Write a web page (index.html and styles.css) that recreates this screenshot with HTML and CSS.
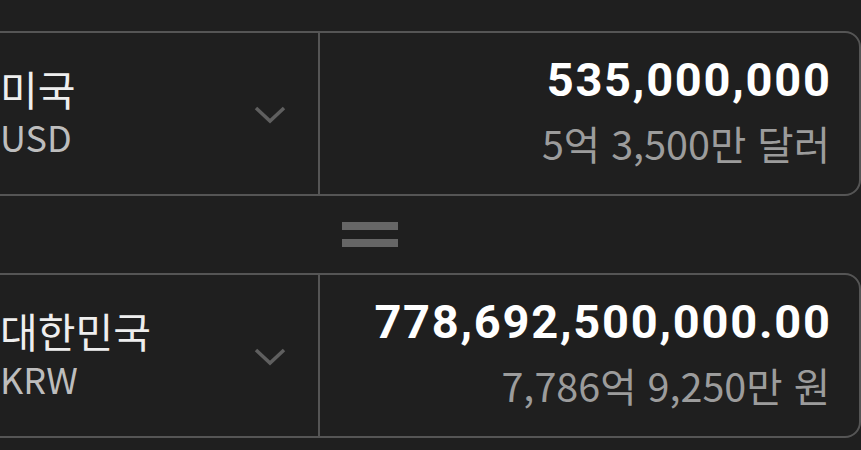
FILE: index.html
```html
<!DOCTYPE html>
<html lang="ko">
<head>
  <meta charset="utf-8">
  <title>환율 계산기</title>
  <meta name="viewport" content="width=device-width, initial-scale=1.0">
  <link rel="stylesheet" href="styles.css">
</head>
<body>
  <div class="converter">
    <div class="card">
      <div class="currency">
        <div class="names">
          <div class="country">미국</div>
          <div class="code">USD</div>
        </div>
        <svg class="chevron" width="32" height="20" viewBox="0 0 32 20">
          <path d="M2 3 L16 16 L30 3" fill="none" stroke="#5f5f5f" stroke-width="3.5"/>
        </svg>
      </div>
      <div class="amount">
        <div class="value">535,000,000</div>
        <div class="words">5억 3,500만 달러</div>
      </div>
    </div>

    <div class="equals">
      <span></span>
      <span></span>
    </div>

    <div class="card">
      <div class="currency">
        <div class="names">
          <div class="country">대한민국</div>
          <div class="code">KRW</div>
        </div>
        <svg class="chevron" width="32" height="20" viewBox="0 0 32 20">
          <path d="M2 3 L16 16 L30 3" fill="none" stroke="#5f5f5f" stroke-width="3.5"/>
        </svg>
      </div>
      <div class="amount">
        <div class="value">778,692,500,000.00</div>
        <div class="words">7,786억 9,250만 원</div>
      </div>
    </div>
  </div>
</body>
</html>
```

FILE: styles.css
```css
html, body {
  margin: 0;
  background-color: #1f1f1f;
  overflow: hidden;
}

body {
  font-family: "Noto Sans CJK KR", "Noto Sans", sans-serif;
}

.converter {
  margin-left: -40px;
  padding-top: 31px;
  width: 901px;
}

.card {
  display: grid;
  grid-template-columns: 358px 1fr;
  height: 161px;
  border: 2px solid #555;
  border-radius: 16px;
}

.currency {
  display: flex;
  align-items: center;
  justify-content: space-between;
  padding: 0 32px 0 38px;
  border-right: 2px solid #555;
}

.names {
  margin-bottom: 4px;
}

.country {
  color: #eeeeee;
  font-size: 41px;
  line-height: 49px;
}

.code {
  color: #bdbdbd;
  font-size: 36px;
  line-height: 46px;
}

.chevron {
  margin-top: 2px;
}

.amount {
  display: flex;
  flex-direction: column;
  align-items: flex-end;
  padding: 19px 29px 0 0;
}

.value {
  color: #ffffff;
  font-family: Roboto, "Noto Sans CJK KR", sans-serif;
  font-weight: 700;
  font-size: 47px;
  line-height: 56px;
  letter-spacing: 1.75px;
  margin-right: -1.75px;
}

.words {
  color: #9c9c9c;
  font-size: 39.5px;
  line-height: 48px;
  margin-top: 11px;
}

.equals {
  display: flex;
  flex-direction: column;
  gap: 9px;
  height: 77px;
  justify-content: center;
  margin-left: 382px;
}

.equals span {
  display: block;
  width: 56px;
  height: 8px;
  background-color: #666;
}
```
